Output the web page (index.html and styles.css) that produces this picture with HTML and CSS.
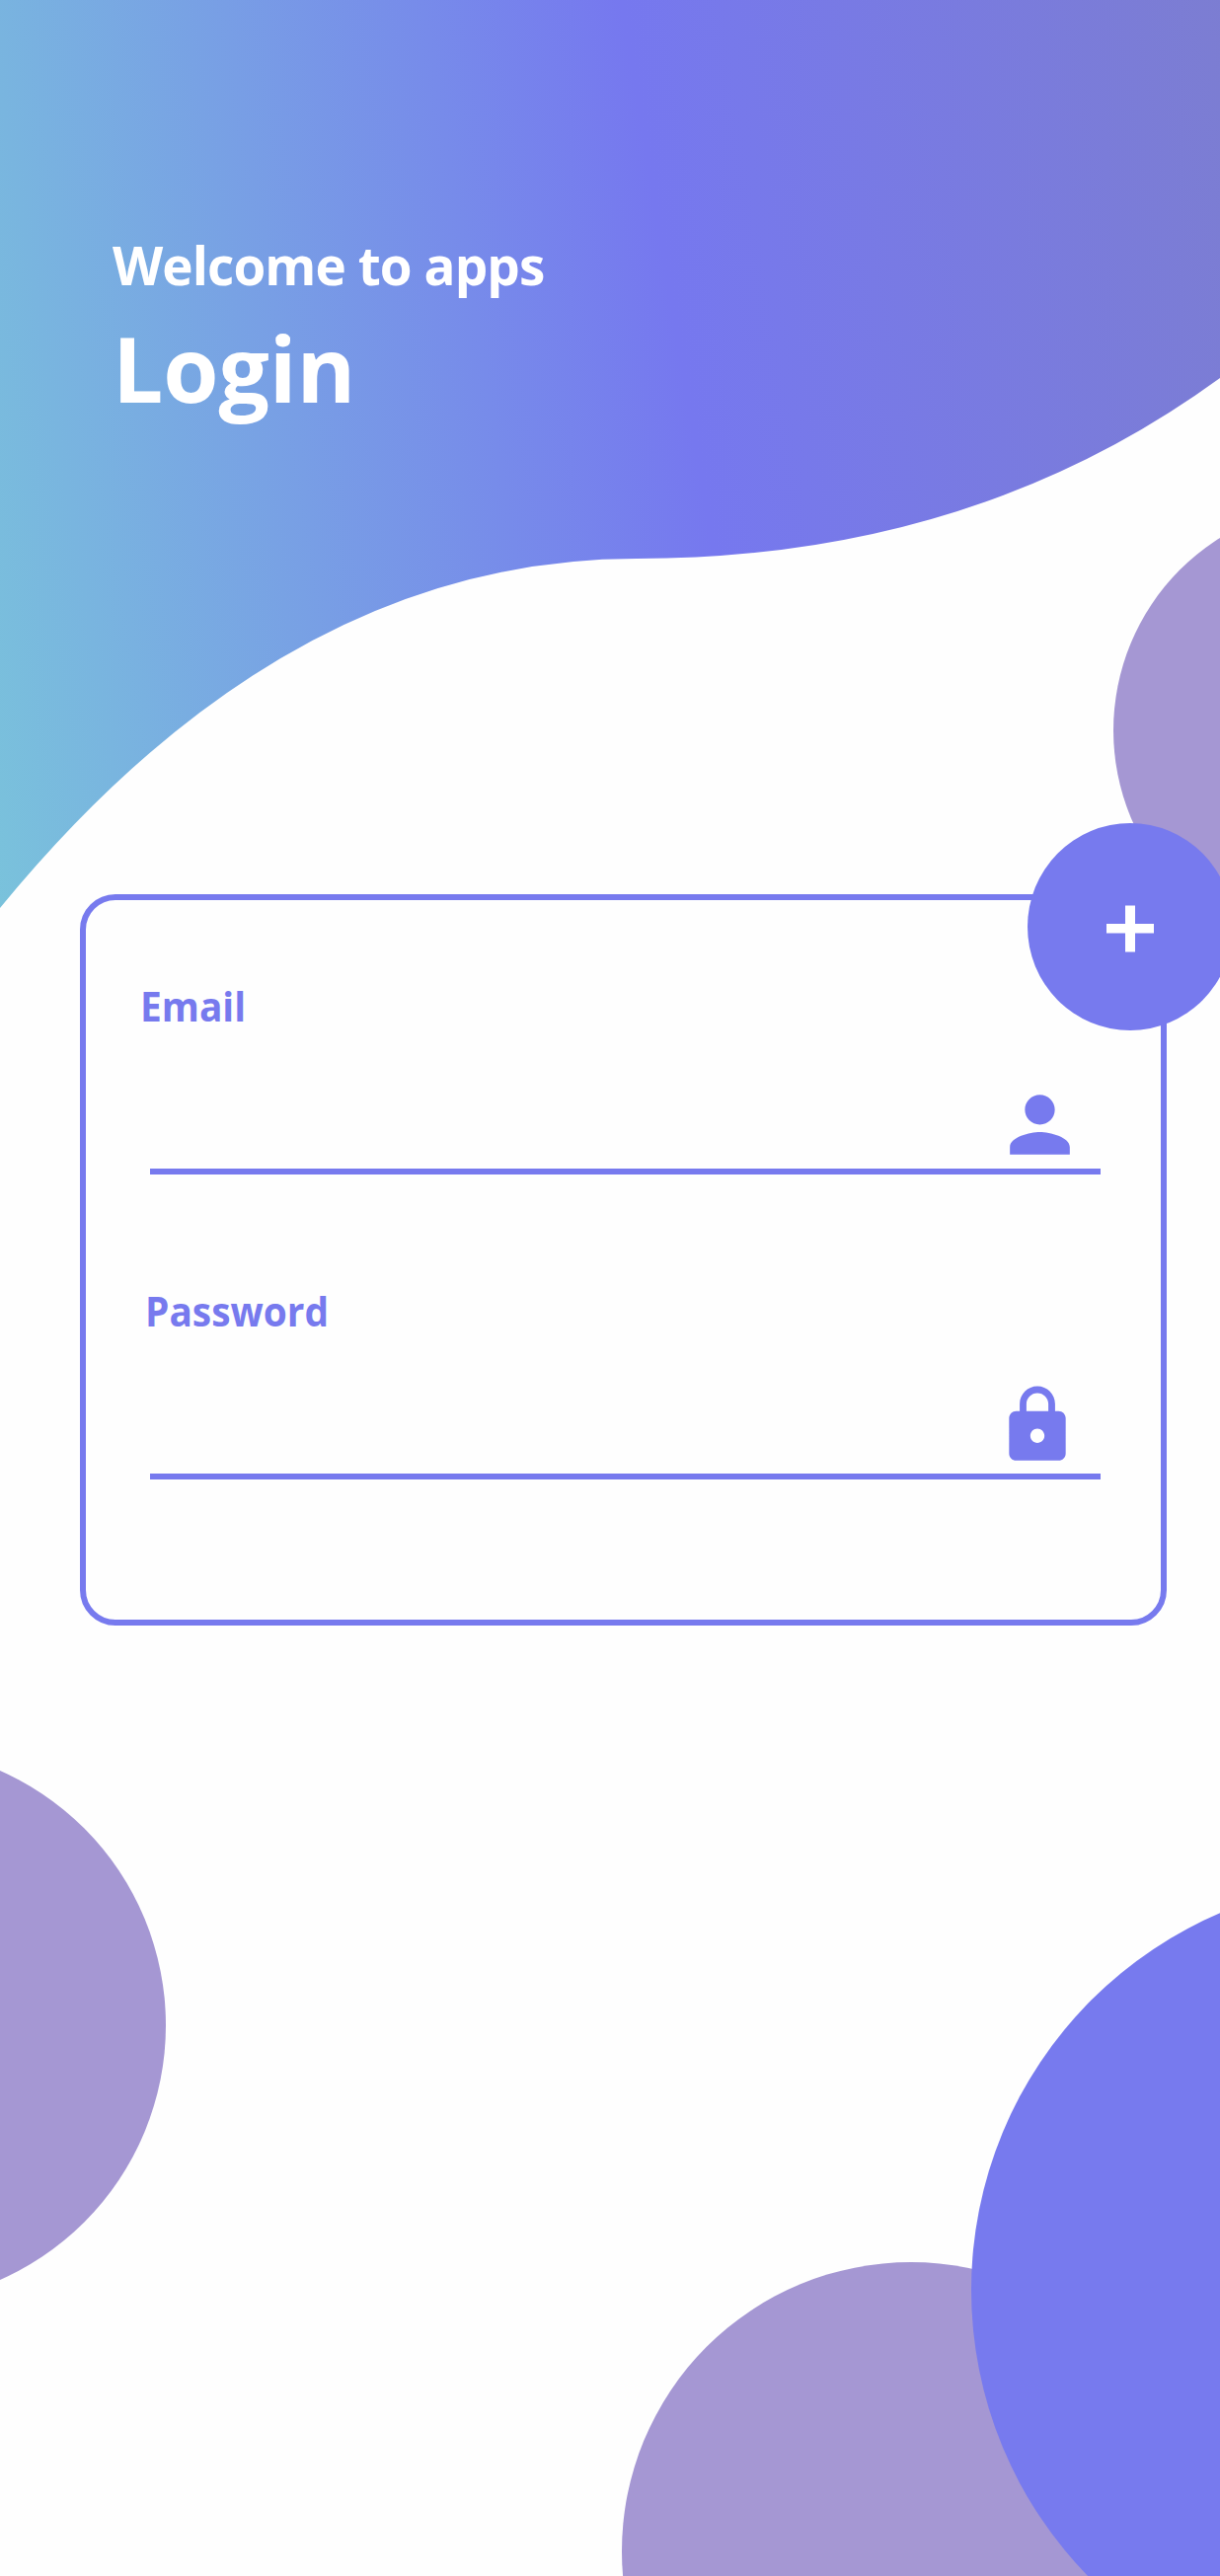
FILE: index.html
```html
<!DOCTYPE html>
<html lang="en">
<head>
<meta charset="utf-8">
<title>Login</title>
<link rel="stylesheet" href="styles.css">
</head>
<body>
<main class="screen">
  <svg class="backdrop" viewBox="0 0 1236 2610" aria-hidden="true">
    <defs>
      <linearGradient id="wave" gradientUnits="userSpaceOnUse" x1="-190" y1="151" x2="1430" y2="-120">
        <stop offset="0" stop-color="#7ac8da"/>
        <stop offset="0.507" stop-color="#7678ef"/>
        <stop offset="1" stop-color="#7e7fc8"/>
      </linearGradient>
    </defs>
    <path fill="url(#wave)" d="M0 0H1236V383Q985 566 645 566Q290 566 0 920Z"/>
    <g class="bubble-soft">
      <circle cx="1358" cy="740" r="230"/>
      <circle cx="-114" cy="2052" r="282"/>
      <circle cx="923" cy="2585" r="293"/>
    </g>
    <circle class="bubble-strong" cx="1399" cy="2320" r="415"/>
  </svg>

  <header class="intro">
    <p class="welcome">Welcome to apps</p>
    <h1 class="title">Login</h1>
  </header>

  <form class="card">
    <div class="field">
      <label class="label label-email" for="email">Email</label>
      <div class="entry">
        <input class="input" id="email" type="email">
        <svg class="icon icon-person" viewBox="0 0 24 24" aria-hidden="true"><path d="M12 12c2.21 0 4-1.79 4-4s-1.79-4-4-4-4 1.79-4 4 1.79 4 4 4zm0 2c-2.67 0-8 1.34-8 4v2h16v-2c0-2.66-5.33-4-8-4z"/></svg>
      </div>
    </div>
    <div class="field">
      <label class="label label-password" for="password">Password</label>
      <div class="entry">
        <input class="input" id="password" type="password">
        <svg class="icon icon-lock" viewBox="0 0 24 24" aria-hidden="true"><path fill-rule="evenodd" d="M18 8H17V6C17 3.24 14.76 1 12 1S7 3.24 7 6V8H6C4.9 8 4 8.900 4 10V20C4 21.100 4.900 22 6 22H18C19.100 22 20 21.100 20 20V10C20 8.900 19.100 8 18 8ZM12 17C10.900 17 10 16.100 10 15S10.900 13 12 13S14 13.900 14 15S13.100 17 12 17ZM15.100 8H8.900V6C8.900 4.290 10.290 2.900 12 2.900S15.100 4.290 15.100 6Z"/></svg>
      </div>
    </div>
    <button class="add" type="button" aria-label="Add">
      <svg class="plus" viewBox="0 0 48 48" aria-hidden="true"><path d="M19 0.500H29V19H48V28.500H29V47.500H19V28.500H0V19H19Z"/></svg>
    </button>
  </form>
</main>
</body>
</html>
```
FILE: styles.css
```css
* {
  box-sizing: border-box;
}

body {
  margin: 0;
  background: #fefefe;
  font-family: "Open Sans", "Noto Sans", sans-serif;
  font-weight: 700;
}

.screen {
  position: relative;
  width: 1236px;
  height: 2610px;
  overflow: hidden;
}

.backdrop {
  position: absolute;
  inset: 0;
  width: 100%;
  height: 100%;
}

.bubble-soft {
  fill: #a597d3;
}

.bubble-strong {
  fill: #777aee;
}

.intro {
  position: relative;
  height: 906px;
  padding: 231px 0 0 114px;
  color: #fff;
}

.welcome {
  margin: 0;
  font-size: 53px;
  line-height: 76px;
  letter-spacing: -0.9px;
}

.title {
  margin: 6px 0 0;
  font-size: 91px;
  line-height: 120px;
  letter-spacing: -0.1px;
}

.card {
  position: relative;
  display: flex;
  flex-direction: column;
  gap: 108px;
  width: 1101px;
  height: 741px;
  margin-left: 81px;
  padding: 77px 61px 0 54px;
  border: 6px solid #777aee;
  border-radius: 36px;
}

.field {
  display: flex;
  flex-direction: column;
  height: 201px;
  padding-left: 10.500px;
}

.label {
  align-self: flex-start;
  color: #777aee;
  font-size: 42px;
  line-height: 60px;
  transform: scaleX(0.925);
  transform-origin: left;
}

.label-email {
  margin-left: -10px;
}

.label-password {
  margin-left: -4.500px;
}

.entry {
  display: flex;
  flex: 1;
  align-items: flex-end;
  width: 963px;
  border-bottom: 6px solid #777aee;
}

.input {
  flex: 1;
  min-width: 0;
  height: 90px;
  padding: 0;
  border: 0;
  outline: 0;
  background: none;
  font: inherit;
  font-size: 40px;
}

.icon {
  flex: none;
  fill: #777aee;
}

.icon-person {
  width: 91px;
  height: 91px;
  margin: 0 15.500px -1px 0;
}

.icon-lock {
  width: 86px;
  height: 86px;
  margin: 0 21px 6px 0;
}

.add {
  position: absolute;
  top: -78px;
  left: 954px;
  display: flex;
  align-items: center;
  justify-content: center;
  width: 208px;
  height: 210px;
  padding: 4px 0 0;
  border: 0;
  border-radius: 50%;
  background: #777aee;
}

.plus {
  width: 48px;
  height: 48px;
  fill: #fff;
}
```
